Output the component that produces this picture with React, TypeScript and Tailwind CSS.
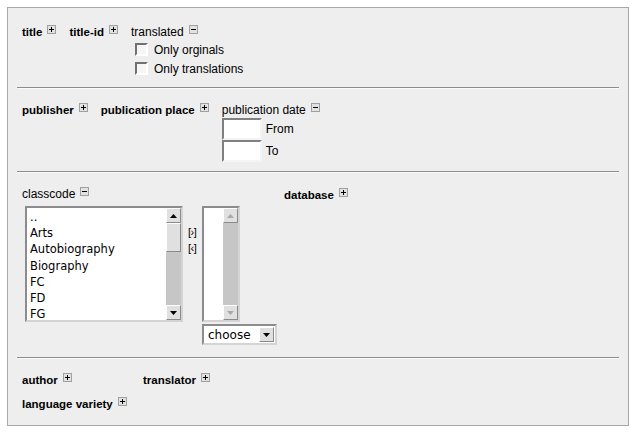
import React from "react";

type ToggleProps = { minus?: boolean };

// small +/- expander box next to each field label
const Toggle = ({ minus }: ToggleProps) => (
  <svg
    width="9"
    height="9"
    viewBox="0 0 9 9"
    className="ml-[5px] mt-[1px] shrink-0"
    shapeRendering="crispEdges"
  >
    <rect x="0.5" y="0.5" width="8" height="8" fill="#e2e2e2" stroke="#a0a0a0" />
    <path d={minus ? "M2 4.5h5" : "M2 4.5h5M4.5 2v5"} stroke="#000" />
  </svg>
);

type FieldProps = { label: string; bold?: boolean; minus?: boolean };

const Field = ({ label, bold, minus }: FieldProps) => (
  <div className="flex h-4 items-start leading-4">
    <span className={bold ? "text-[11.5px] font-bold" : "text-[12px]"}>{label}</span>
    <Toggle minus={minus} />
  </div>
);

const Hr = ({ className }: { className: string }) => (
  <div className={`h-0 border-t border-b border-t-[#8c8c8c] border-b-[#fafafa] ${className}`} />
);

const Checkbox = ({ label }: { label: string }) => (
  <div className="flex h-[19px] items-center gap-[6px]">
    <span className="h-[13px] w-[13px] border-2 border-t-[#707070] border-l-[#707070] border-r-white border-b-white bg-[#f6f6f6]" />
    <span className="text-[12px]">{label}</span>
  </div>
);

const ArrowBtn = ({ down, disabled }: { down?: boolean; disabled?: boolean }) => (
  <div className="flex h-[15px] w-[15px] items-center justify-center border border-t-white border-l-white border-r-[#8a8a8a] border-b-[#8a8a8a] bg-[#e0e0e0]">
    <svg width="7" height="4" viewBox="0 0 7 4">
      <path
        d={down ? "M0 0h7L3.5 4z" : "M0 4h7L3.5 0z"}
        fill={disabled ? "#a8a8a8" : "#000"}
      />
    </svg>
  </div>
);

const Scrollbar = ({ disabled }: { disabled?: boolean }) => (
  <div className="flex w-[15px] flex-col bg-[#c6c6c6]">
    <ArrowBtn disabled={disabled} />
    {!disabled && (
      <div className="h-[29px] border border-t-white border-l-white border-r-[#8a8a8a] border-b-[#8a8a8a] bg-[#e0e0e0]" />
    )}
    <div className="flex-1" />
    <ArrowBtn down disabled={disabled} />
  </div>
);

const classcodes = ["..", "Arts", "Autobiography", "Biography", "FC", "FD", "FG"];

export default function App() {
  return (
    <div className="min-h-screen bg-white pl-[7px] pt-[7px] font-['Liberation_Sans',Arial,sans-serif] text-black">
      <div className="h-[419px] w-[622px] border border-[#a8a8a8] bg-[#eeeeee] px-[9px] pt-[16px]">
        {/* title / translated */}
        <div className="flex items-start gap-[13px] pl-[5px]">
          <Field label="title" bold />
          <Field label="title-id" bold />
          <div>
            <Field label="translated" minus />
            <div className="pl-[4px]">
              <Checkbox label="Only orginals" />
              <Checkbox label="Only translations" />
            </div>
          </div>
        </div>

        <Hr className="mt-[9px]" />

        {/* publisher / date */}
        <div className="mt-[13px] flex items-start gap-[13px] pl-[5px]">
          <Field label="publisher" bold />
          <Field label="publication place" bold />
          <div>
            <Field label="publication date" minus />
            {["From", "To"].map((t) => (
              <div key={t} className="flex h-[22px] items-center gap-[4px]">
                <span className="h-[22px] w-[40px] border-2 border-t-[#808080] border-l-[#808080] border-r-[#f4f4f4] border-b-[#f4f4f4] bg-white" />
                <span className="text-[12px]">{t}</span>
              </div>
            ))}
          </div>
        </div>

        <Hr className="mt-[9px]" />

        {/* classcode / database */}
        <div className="mt-[13px] flex items-start pl-[5px]">
          <div className="w-[262px]">
            <Field label="classcode" minus />
            <div className="mt-[4px] flex items-start pl-[3px]">
              <div className="flex h-[116px] w-[158px] border-2 border-t-[#8c8c8c] border-l-[#8c8c8c] border-r-[#d4d4d4] border-b-[#d4d4d4]">
                <ul className="flex-1 overflow-hidden bg-white pl-[3px] pt-[1px] font-['DejaVu_Sans',sans-serif] text-[11.5px] leading-[16.2px]">
                  {classcodes.map((c) => (
                    <li key={c}>{c}</li>
                  ))}
                </ul>
                <Scrollbar />
              </div>
              <div className="flex w-[19px] flex-col gap-[4px] pl-[5px] pt-[20px] text-[11px] leading-[12px]">
                <span className="tracking-[-0.5px]">[›]</span>
                <span className="tracking-[-0.5px]">[‹]</span>
              </div>
              <div>
                <div className="flex h-[116px] w-[38px] border-2 border-t-[#8c8c8c] border-l-[#8c8c8c] border-r-[#d4d4d4] border-b-[#d4d4d4]">
                  <div className="flex-1 bg-white" />
                  <Scrollbar disabled />
                </div>
                <div className="mt-[2px] flex h-[21px] w-[75px] items-center border-2 border-t-[#8c8c8c] border-l-[#8c8c8c] border-r-[#d4d4d4] border-b-[#d4d4d4] bg-white">
                  <span className="pl-[4px] font-['DejaVu_Sans',sans-serif] text-[12px]">choose</span>
                  <div className="ml-auto mr-[1px]">
                    <ArrowBtn down />
                  </div>
                </div>
              </div>
            </div>
          </div>
          <div className="pt-[1px]">
            <Field label="database" bold />
          </div>
        </div>

        <Hr className="mt-[12px]" />

        {/* author / translator / language */}
        <div className="mt-[13px] pl-[5px]">
          <div className="flex items-start">
            <div className="w-[121px]">
              <Field label="author" bold />
            </div>
            <Field label="translator" bold />
          </div>
          <div className="mt-[8px]">
            <Field label="language variety" bold />
          </div>
        </div>
      </div>
    </div>
  );
}
